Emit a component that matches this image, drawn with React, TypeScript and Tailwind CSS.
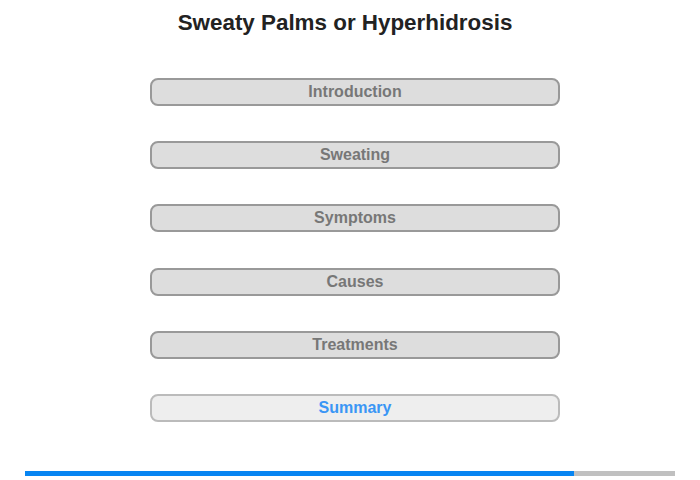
const sections = ["Introduction", "Sweating", "Symptoms", "Causes", "Treatments", "Summary"];

export default function App() {
	return (
		<div className="flex h-[480px] w-[700px] flex-col bg-white font-['Liberation_Sans',Arial,sans-serif]">
			<h1 className="mt-[11px] h-[24px] pr-[10px] text-center text-[22.4px] leading-[24px] font-bold text-[#222]">
				Sweaty Palms or Hyperhidrosis
			</h1>
			<div className="mt-[43px] flex flex-col items-center gap-[35.2px] pl-[9px]">
				{sections.map((s) => {
					const active = s === "Summary";
					return (
						<div
							key={s}
							className={
								active
									? "flex h-[28px] w-[410px] items-center justify-center rounded-[8px] border-2 border-[#bbb] bg-[#eee] pl-[1px] text-[16px] font-bold text-[#3a96f5]"
									: "flex h-[28px] w-[410px] items-center justify-center rounded-[8px] border-2 border-[#999] bg-[#ddd] pl-[1px] text-[16px] font-bold text-[#777]"
							}
						>
							{s}
						</div>
					);
				})}
			</div>
			<div className="mt-auto mb-[4px] ml-[25px] flex h-[5px] w-[650px]">
				<div className="h-full w-[549px] bg-[#0785f2]" />
				<div className="h-full flex-1 bg-[#c0c0c0]" />
			</div>
		</div>
	);
}
